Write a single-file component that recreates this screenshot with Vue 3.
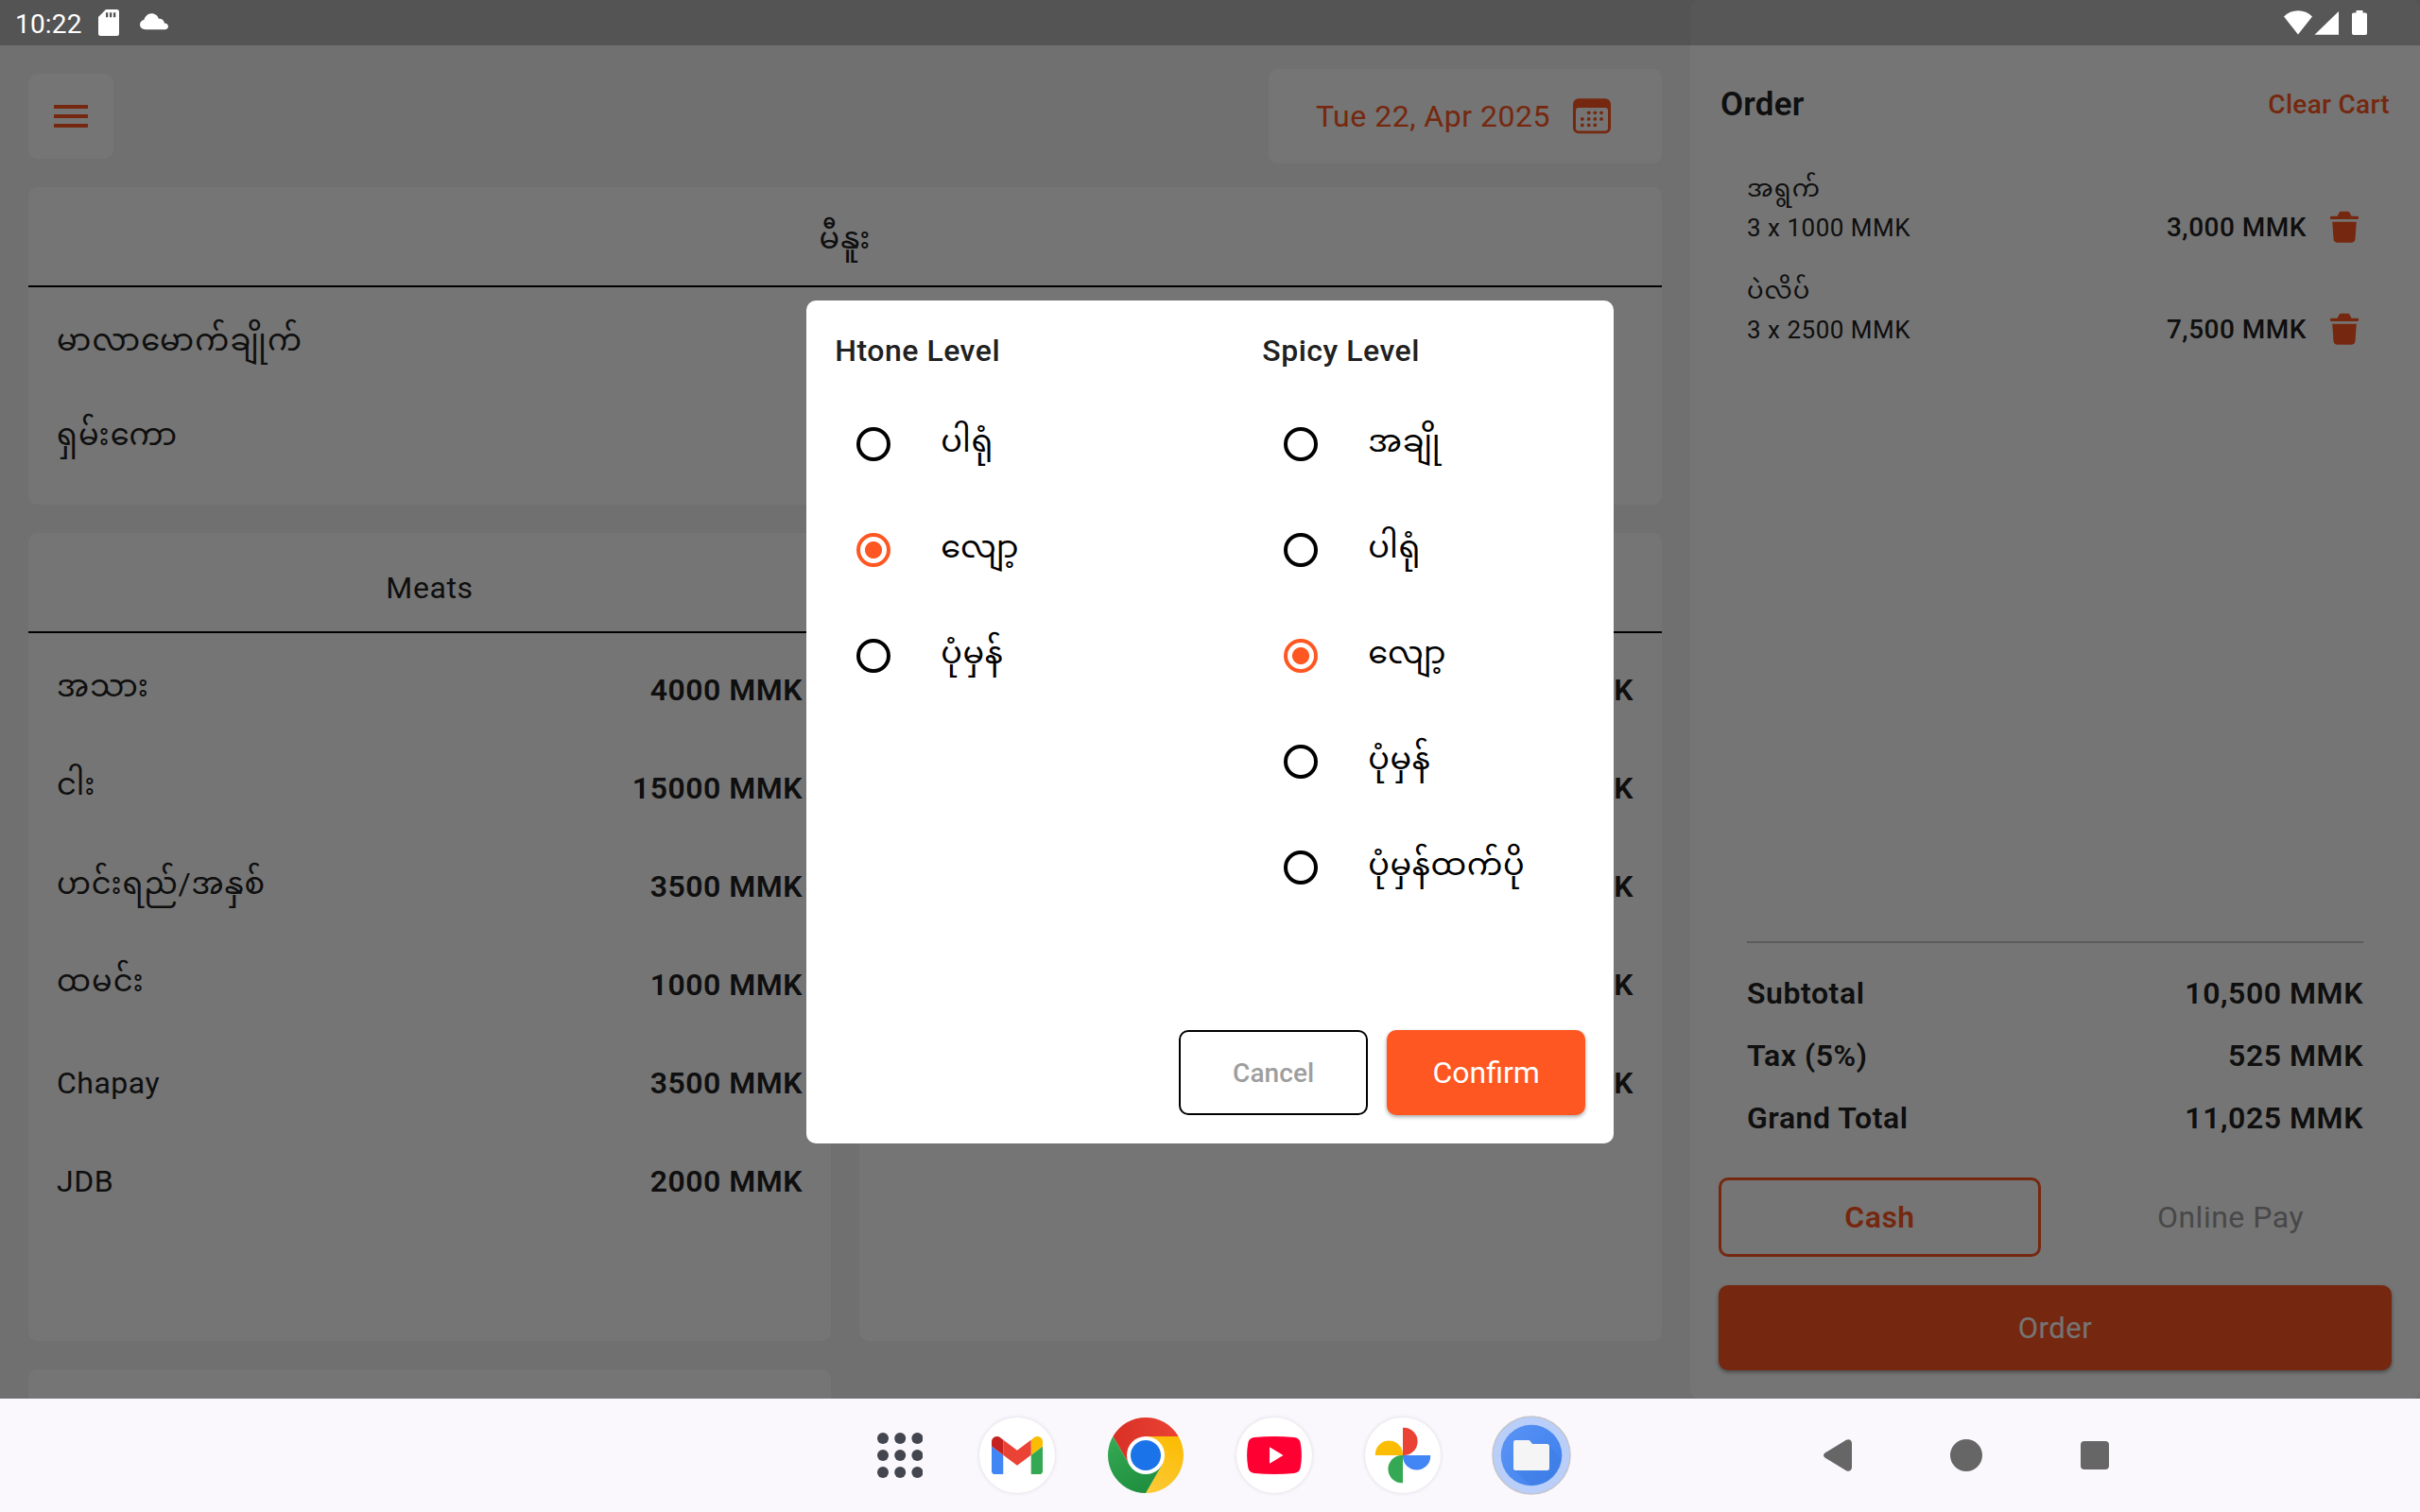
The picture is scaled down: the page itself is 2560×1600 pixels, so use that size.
<script setup>
const categories = ['မာလာမောက်ချိုက်', 'ရှမ်းကော']
const meats = [
  { name: 'အသား', price: '4000 MMK', mm: true },
  { name: 'ငါး', price: '15000 MMK', mm: true },
  { name: 'ဟင်းရည်/အနှစ်', price: '3500 MMK', mm: true, low: true },
  { name: 'ထမင်း', price: '1000 MMK', mm: true },
  { name: 'Chapay', price: '3500 MMK', mm: false },
  { name: 'JDB', price: '2000 MMK', mm: false },
]
const sidePrices = ['MMK', 'MMK', 'MMK', 'MMK', 'MMK']
const cart = [
  { name: 'အရွက်', qty: '3 x 1000 MMK', total: '3,000 MMK' },
  { name: 'ပဲလိပ်', qty: '3 x 2500 MMK', total: '7,500 MMK' },
]
const totals = [
  ['Subtotal', '10,500 MMK'],
  ['Tax (5%)', '525 MMK'],
  ['Grand Total', '11,025 MMK'],
]
const levels = [
  { title: 'Htone Level', selected: 1, options: ['ပါရုံ', 'လျော့', 'ပုံမှန်'] },
  { title: 'Spicy Level', selected: 2, options: ['အချို', 'ပါရုံ', 'လျော့', 'ပုံမှန်', 'ပုံမှန်ထက်ပို'] },
]
const calendarDots = [
  [20.7, 20.3], [27.3, 20.3], [34, 20.3],
  [13.8, 26.9], [20.7, 26.9], [27.3, 26.9], [34, 26.9],
  [13.8, 33.4], [20.7, 33.4], [27.3, 33.4],
]
const grid = [6, 24.2, 42.4]
const gridY = [6, 24, 42]
</script>

<template>
  <div class="device">
    <div class="screen">
      <div class="app">
        <main class="main">
          <div class="topbar">
            <button class="menu-btn">
              <svg width="48" height="48" viewBox="0 0 24 24"><path fill="#ff5722" d="M3 18h18v-2H3v2zm0-5h18v-2H3v2zm0-7v2h18V6H3z" /></svg>
            </button>
            <div class="date">
              <span>Tue 22, Apr 2025</span>
              <svg width="48" height="48" viewBox="0 0 48 48">
                <path fill="#ff5722" fill-rule="evenodd" d="M10 5.3h28a6 6 0 0 1 6 6v25a6 6 0 0 1-6 6H10a6 6 0 0 1-6-6v-25a6 6 0 0 1 6-6zM10 15a3 3 0 0 0-3 3v18.500a3 3 0 0 0 3 3h28a3 3 0 0 0 3-3V18a3 3 0 0 0-3-3z" />
                <circle v-for="(d, i) in calendarDots" :key="i" :cx="d[0]" :cy="d[1]" r="1.9" fill="#ff5722" />
              </svg>
            </div>
          </div>

          <section class="card menu-card">
            <h2 class="card-head"><span class="mm">မီနူး</span></h2>
            <div v-for="c in categories" :key="c" class="cat-row"><span>{{ c }}</span></div>
          </section>

          <div class="columns">
            <div class="column">
              <section class="card list-card">
                <h2 class="card-head">Meats</h2>
                <div class="rows">
                  <div v-for="m in meats" :key="m.name" class="row">
                    <span :class="{ mm: m.mm, low: m.low }">{{ m.name }}</span>
                    <b>{{ m.price }}</b>
                  </div>
                </div>
              </section>
              <section class="card next-card"></section>
            </div>
            <div class="column">
              <section class="card list-card">
                <h2 class="card-head"></h2>
                <div class="rows">
                  <div v-for="(p, i) in sidePrices" :key="i" class="row"><span></span><b>{{ p }}</b></div>
                </div>
              </section>
            </div>
          </div>
        </main>

        <aside class="order">
          <header class="order-head">
            <h1>Order</h1>
            <a class="clear">Clear Cart</a>
          </header>
          <ul class="cart">
            <li v-for="c in cart" :key="c.name">
              <div class="cart-name">{{ c.name }}</div>
              <div class="cart-line">
                <span class="qty">{{ c.qty }}</span>
                <span class="price">{{ c.total }}</span>
                <svg width="40" height="40" viewBox="0 0 40 40">
                  <path fill="#ff5722" d="M12.500 8.700 14.400 5q.7-1.300 2-1.300h7.200q1.300 0 2 1.300l1.900 3.700h6.500q1 0 1 1v1.400q0 1-1 1H6q-1 0-1-1V9.700q0-1 1-1zM7.200 14.700h25.600l-1.300 18q-.4 4-4.300 4H12.800q-3.900 0-4.300-4z" />
                </svg>
              </div>
            </li>
          </ul>
          <div class="totals">
            <div v-for="t in totals" :key="t[0]" class="total-row"><span>{{ t[0] }}</span><span>{{ t[1] }}</span></div>
          </div>
          <div class="pay">
            <button class="cash">Cash</button>
            <button class="online">Online Pay</button>
          </div>
          <button class="order-btn">Order</button>
        </aside>
      </div>

      <div class="scrim">
        <div class="dialog">
          <div class="levels">
            <div v-for="l in levels" :key="l.title" class="level">
              <h3>{{ l.title }}</h3>
              <label v-for="(o, i) in l.options" :key="o" class="option">
                <span class="radio" :class="{ on: i === l.selected }"></span>
                <span class="option-label">{{ o }}</span>
              </label>
            </div>
          </div>
          <div class="actions">
            <button class="cancel">Cancel</button>
            <button class="confirm">Confirm</button>
          </div>
        </div>
      </div>

      <div class="status">
        <span class="clock">10:22</span>
        <svg class="sd" width="22" height="28" viewBox="0 0 22 28">
          <path fill="#fff" fill-rule="evenodd" d="M8 0h11.500Q22 0 22 2.500v23q0 2.500-2.500 2.500h-17Q0 28 0 25.500V8zM8 3.300v5h2.300v-5zm4 0v5h2.300v-5zm4 0v5h2.300v-5z" />
        </svg>
        <svg class="cloud" width="30" height="18" viewBox="0 0 30 18">
          <path fill="#fff" d="M6 17.200C2.500 17.200 0 15 0 12c0-2.600 1.900-4.600 4.400-5C5.500 3 8.500.2 12.300.2c3.600 0 6.600 2.200 7.600 5.700 3.200-.3 5.600 1.700 6 4.600 2.400.2 4.100 1.500 4.100 3.500 0 1.900-1.500 3.200-3.700 3.200z" />
        </svg>
        <svg class="right" width="90" height="28" viewBox="0 0 90 28">
          <path fill="#fff" d="M0 6.500C8 -2 22 -2 30 6.500L15 25.500z" />
          <path fill="#fff" d="M32.500 25.700 58 1v24.700z" />
          <path fill="#fff" d="M76.500 0h7v2.500h2.700q1.800 0 1.800 1.800v19.900q0 1.800-1.800 1.800H73.800q-1.800 0-1.800-1.800V4.300q0-1.800 1.800-1.800h2.700z" />
        </svg>
      </div>
    </div>

    <nav class="taskbar">
      <div class="cell dots">
        <svg width="48.400" height="48" viewBox="0 0 48.400 48" fill="#44464f">
          <template v-for="y in gridY" :key="y"><circle v-for="x in grid" :key="x" :cx="x" :cy="y" r="6" /></template>
        </svg>
      </div>
      <div class="cell">
        <div class="round">
          <svg width="54" height="40.500" viewBox="52 42 88 66">
            <path fill="#4285f4" d="M58 108h14V74L52 59v43c0 3.320 2.690 6 6 6" />
            <path fill="#34a853" d="M120 108h14c3.320 0 6-2.690 6-6V59l-20 15" />
            <path fill="#fbbc04" d="M120 48v26l20-15v-8c0-7.420-8.470-11.650-14.400-7.200" />
            <path fill="#ea4335" d="M72 74V48l24 18 24-18v26L96 92" />
            <path fill="#c5221f" d="M52 51v8l20 15V48l-5.600-4.200c-5.940-4.450-14.400-.220-14.400 7.200" />
          </svg>
        </div>
      </div>
      <div class="cell">
        <svg width="80" height="80" viewBox="-40 -40 80 80">
          <defs>
            <linearGradient id="cr" x1="0" x2="1"><stop offset="0" stop-color="#d93025" /><stop offset="1" stop-color="#ea4335" /></linearGradient>
            <linearGradient id="cy" x1="0.300" y1="1" x2="0.700" y2="0"><stop offset="0" stop-color="#fcc934" /><stop offset="1" stop-color="#fbbc04" /></linearGradient>
            <linearGradient id="cg" x1="0.700" y1="1" x2="0.200" y2="0"><stop offset="0" stop-color="#1e8e3e" /><stop offset="1" stop-color="#34a853" /></linearGradient>
          </defs>
          <path fill="url(#cr)" d="M-34.640-20A40 40 0 0 1 34.640-20L0-20-17.320 10z" />
          <path fill="url(#cy)" d="M34.640-20A40 40 0 0 1 0 40L17.320 10 0-20z" />
          <path fill="url(#cg)" d="M0 40A40 40 0 0 1-34.640-20L-17.320 10H17.320z" />
          <circle r="20" fill="#fff" /><circle r="16" fill="#1a73e8" />
        </svg>
      </div>
      <div class="cell">
        <div class="round">
          <svg width="58" height="40" viewBox="0 0 58 40">
            <path fill="#f03" d="M8 1Q29-1 50 1q6 .8 6.800 6.500Q59 20 56.800 32.500 56 38.200 50 39q-21 2-42 0-6-.8-6.800-6.500Q-1 20 1.200 7.500 2 1.800 8 1z" />
            <path fill="#fff" d="M24 11.300v17.400L38.500 20z" />
          </svg>
        </div>
      </div>
      <div class="cell">
        <div class="round">
          <svg width="60" height="60" viewBox="-30 -30 60 60">
            <path fill="#ea4335" d="M0-29.200V0H1a14.600 14.600 0 0 0 0-29.200z" />
            <path fill="#fbbc04" d="M-29.200 0H0V-1a14.600 14.600 0 0 0-29.200 0z" />
            <path fill="#4285f4" d="M29.200 0H0v1a14.600 14.600 0 0 0 29.200 0z" />
            <path fill="#34a853" d="M0 29.200V0h-1a14.600 14.600 0 0 0 0 29.200z" />
          </svg>
        </div>
      </div>
      <div class="cell">
        <svg width="88" height="88" viewBox="-44 -44 88 88">
          <defs><linearGradient id="fb" x1="0" x2="1" y2="0.600"><stop offset="0" stop-color="#5c94f5" /><stop offset="1" stop-color="#4082ee" /></linearGradient></defs>
          <circle r="41" fill="#b9cef8" stroke="#c3c5cb" stroke-width="1.500" />
          <circle r="32.300" fill="url(#fb)" />
          <path fill="#3b78dd" opacity=".35" d="M19-11 31 4A32 32 0 0 1-2 31L-18 16z" />
          <path fill="#f5f5f5" d="M-17-16H-3q1 0 1.800 1L1-12h15.500q2.500 0 2.500 2.500V13.500q0 2.500-2.500 2.500h-33q-2.500 0-2.500-2.500v-27Q-19-16-17-16z" />
        </svg>
      </div>
      <div class="cell back">
        <svg width="30" height="34" viewBox="0 0 30 34"><path fill="#666" d="M1.500 14.500 24 .8Q27 -.8 29 1.500 30 2.600 30 4.500v25q0 1.900-1 3-2 2.300-5 .7L1.500 19.500Q-1.500 17 1.500 14.500z" /></svg>
      </div>
      <div class="cell"><span class="home"></span></div>
      <div class="cell"><span class="recents"></span></div>
    </nav>
  </div>
</template>

<style>
body { margin: 0; overflow: hidden; }
</style>

<style scoped>
.device {
  width: 2560px;
  height: 1600px;
  overflow: hidden;
  font-family: Roboto, "Noto Sans Myanmar", sans-serif;
  font-size: 32px;
  line-height: 40px;
  color: #212121;
}
.device * { box-sizing: border-box; }
h1, h2, h3, ul { margin: 0; padding: 0; font: inherit; list-style: none; }
button { font: inherit; border: 0; background: none; padding: 0; color: inherit; border-radius: 10px; }
svg { display: block; flex: none; }

.screen { position: relative; height: 1480px; overflow: hidden; }
.app { display: flex; height: 1480px; background: #f5f5f5; }
.main { width: 1788px; padding: 73px 30px 0; display: flex; flex-direction: column; }
.topbar { display: flex; justify-content: space-between; align-items: center; height: 100px; flex: none; margin-bottom: 25px; }
.menu-btn { width: 90px; height: 90px; background: #fff; display: flex; align-items: center; justify-content: center; }
.date {
  width: 416px; height: 100px; padding: 0 50px; background: #fff; border-radius: 10px;
  display: flex; align-items: center; justify-content: space-between;
  color: #ff5722; letter-spacing: .5px; white-space: nowrap;
}
.card { background: #fff; border-radius: 10px; flex: none; }
.card-head {
  height: 106px; border-bottom: 2px solid #000; padding-top: 12px;
  display: flex; align-items: center; justify-content: center; letter-spacing: .6px;
}
.mm { padding-bottom: 8px; letter-spacing: 1px; }
.menu-card { height: 336px; margin-bottom: 30px; }
.cat-row { height: 100px; padding: 0 30px 5px; display: flex; align-items: center; letter-spacing: 1.2px; }
.card-head + .cat-row { margin-top: 8px; }
.columns { display: flex; gap: 30px; }
.column { flex: 1; display: flex; flex-direction: column; gap: 30px; }
.list-card { height: 855px; }
.next-card { height: 200px; }
.rows { padding: 8px 30px 0; }
.row { height: 104px; display: flex; align-items: center; justify-content: space-between; letter-spacing: .5px; }
.row .mm { letter-spacing: 1px; }
.row .low { padding-bottom: 6px; letter-spacing: .8px; }
.row b { font-weight: 600; }

.order {
  width: 772px; background: #fff; border-radius: 10px; padding: 81px 30px 30px;
  display: flex; flex-direction: column;
}
.order-head { height: 60px; display: flex; align-items: center; justify-content: space-between; padding: 0 2px; }
.order-head h1 { font-size: 35px; font-weight: 600; letter-spacing: .2px; }
.clear { font-size: 28px; font-weight: 500; color: #ff5722; letter-spacing: .3px; }
.cart { margin: 37px 30px 0; display: flex; flex-direction: column; gap: 24px; flex: 1; }
.cart-name { height: 42px; line-height: 42px; font-size: 26px; letter-spacing: 1px; }
.cart-line { height: 42px; display: flex; align-items: center; }
.qty { font-size: 26px; letter-spacing: .5px; flex: 1; }
.price { font-size: 28px; font-weight: 500; letter-spacing: .5px; margin-right: 20px; }
.cart-line svg { margin-top: -3px; }
.totals { margin: 0 30px 30px; border-top: 2px solid #c6c6c6; padding-top: 20px; }
.total-row { height: 66px; display: flex; align-items: center; justify-content: space-between; font-weight: 600; letter-spacing: .55px; }
.pay { display: flex; gap: 30px; height: 84px; margin-bottom: 30px; }
.pay button { width: 341px; letter-spacing: .5px; }
.pay .cash { border: 3px solid #ff5722; color: #ff5722; font-weight: 600; }
.pay .online { color: #9e9e9e; }
.order-btn { height: 90px; padding-top: 1px; background: #ff5722; color: #fff; font-size: 31px; letter-spacing: .5px; box-shadow: 0 2px 4px rgba(0, 0, 0, .4); }

.scrim {
  position: absolute; inset: 0; background: rgba(0, 0, 0, .54); padding-top: 48px;
  display: flex; align-items: center; justify-content: center;
}
.dialog {
  width: 853.33px; height: 892px; background: #fff; border-radius: 10px; padding: 30px;
  display: flex; flex-direction: column; justify-content: space-between;
}
.levels { display: grid; grid-template-columns: 452px 1fr; }
.level h3 { height: 66px; line-height: 47px; font-weight: 500; letter-spacing: .5px; white-space: nowrap; }
.option { height: 112px; display: flex; align-items: center; color: #000; }
.radio { width: 36px; height: 36px; margin: 0 53.5px 0 22.5px; border: 4px solid #000; border-radius: 50%; flex: none; }
.radio.on { border-color: #ff5722; background: radial-gradient(circle, #ff5722 8.600px, #fff 9.400px); }
.option-label { font-size: 33.5px; letter-spacing: .6px; padding-bottom: 7px; white-space: nowrap; }
.actions { display: flex; justify-content: flex-end; gap: 20px; }
.cancel { width: 200px; height: 90px; padding: 1px 0 0 1px; border: 2px solid #000; color: #9e9e9e; font-size: 28px; font-weight: 500; letter-spacing: .1px; }
.confirm { width: 210px; height: 90px; padding-left: 1px; background: #ff5722; color: #fff; letter-spacing: 0; box-shadow: 0 2px 4px rgba(0, 0, 0, .35); }

.status {
  position: absolute; top: 0; left: 0; right: 0; height: 48px; background: rgba(0, 0, 0, .25);
  display: flex; align-items: flex-start; padding: 0 54px 0 16px; color: #fff;
}
.clock { font-size: 28px; line-height: 51px; letter-spacing: .2px; width: 88px; }
.sd { margin-top: 10px; }
.cloud { margin: 14px 0 0 22px; }
.right { margin: 11px 0 0 auto; }

.taskbar { height: 120px; background: #faf8fd; display: flex; align-items: center; padding-left: 896px; }
.cell { width: 136px; height: 120px; display: flex; align-items: center; justify-content: center; flex: none; }
.dots { width: 112px; }
.back { margin-left: 188px; }
.round {
  width: 80px; height: 80px; border-radius: 50%; background: #fff; box-shadow: 0 0 4px rgba(60, 60, 80, .16);
  display: flex; align-items: center; justify-content: center;
}
.home { width: 34px; height: 34px; border-radius: 50%; background: #666; }
.recents { width: 30px; height: 30px; border-radius: 4px; background: #666; }
</style>
